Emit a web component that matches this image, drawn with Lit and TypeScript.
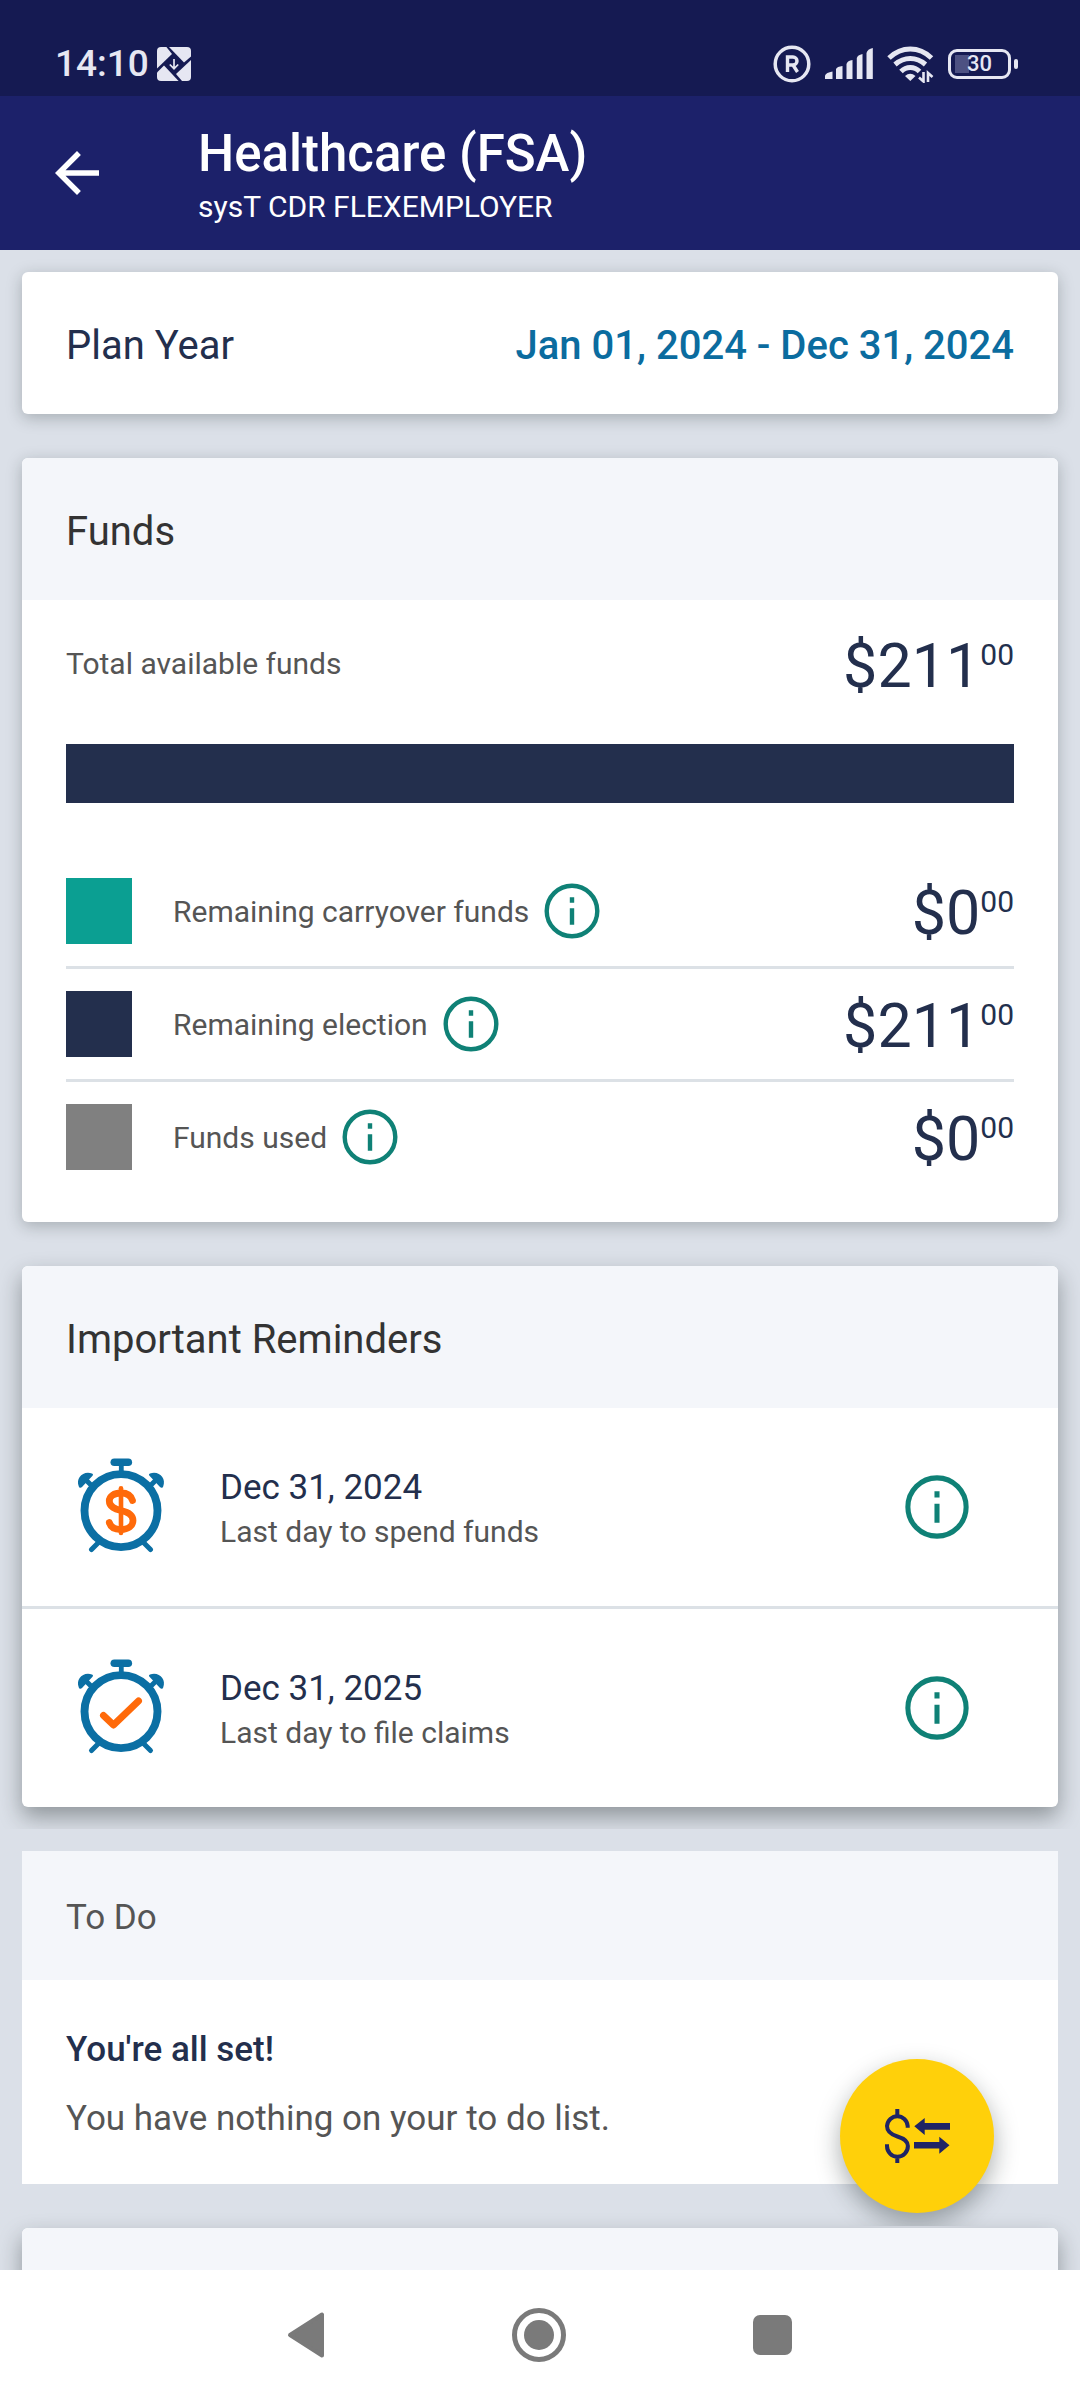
import { LitElement, html, css, svg } from "lit";
import { customElement, property } from "lit/decorators.js";

interface Fund {
  label: string;
  dollars: number;
  color: string;
}

interface Reminder {
  date: string;
  note: string;
  kind: "spend" | "claim";
}

const FUNDS: Fund[] = [
  { label: "Remaining carryover funds", dollars: 0, color: "#0b9f92" },
  { label: "Remaining election", dollars: 211, color: "#232f4d" },
  { label: "Funds used", dollars: 0, color: "#808080" },
];

const REMINDERS: Reminder[] = [
  { date: "Dec 31, 2024", note: "Last day to spend funds", kind: "spend" },
  { date: "Dec 31, 2025", note: "Last day to file claims", kind: "claim" },
];

@customElement("money-amount")
export class MoneyAmount extends LitElement {
  @property({ type: Number }) dollars = 0;

  static styles = css`
    :host {
      display: flex;
      align-items: flex-start;
      padding-top: 4px;
      color: #232f4d;
    }
    .dollars {
      font-size: 61px;
      line-height: 62px;
    }
    .cents {
      padding-top: 5px;
      font-size: 30px;
      line-height: 30px;
    }
  `;

  render() {
    return html`<span class="dollars">$${this.dollars}</span><span class="cents">00</span>`;
  }
}

@customElement("info-button")
export class InfoButton extends LitElement {
  @property() label = "";

  static styles = css`
    :host {
      display: block;
    }
    .button {
      display: block;
      width: 100%;
      padding: 0;
      border: 0;
      background: none;
      color: #0f8176;
      cursor: pointer;
    }
    .icon {
      display: block;
      width: 100%;
    }
  `;

  render() {
    return html`<button class="button" type="button" aria-label=${this.label}>
      <svg class="icon" viewBox="0 0 24 24" aria-hidden="true">
        <circle cx="12" cy="12" r="9.2" fill="none" stroke="currentColor" stroke-width="1.6" />
        <path d="M11.2 7h1.6v2h-1.6zM11.2 11h1.6v6h-1.6z" fill="currentColor" />
      </svg>
    </button>`;
  }
}

@customElement("alarm-icon")
export class AlarmIcon extends LitElement {
  @property() kind: "spend" | "claim" = "spend";

  static styles = css`
    :host {
      display: block;
      width: 110px;
    }
    .icon {
      display: block;
      width: 100%;
    }
  `;

  render() {
    const mark =
      this.kind === "spend"
        ? svg`<path d="M66.500 48.500C65 43.500 61 41 55 41C48 41 43.300 44.300 43.300 49C43.300 55 49 57 55 58.500C62 60 67 62.500 67 68.500C67 74 62 77.500 55 77.500C48.500 77.500 44.500 75 43.300 70.500" stroke-width="6.800" /><path d="M55 36.200V81" stroke-width="4.600" />`
        : svg`<path d="M37.500 62.500L47.500 72L72.500 48" stroke-width="7" />`;
    return html`<svg class="icon" viewBox="0 0 110 110" aria-hidden="true">
      <g fill="none" stroke="#0b6fa4" stroke-linecap="round">
        <circle cx="55" cy="58.600" r="36.500" stroke-width="7.900" />
        <path d="M48.300 10.300H62.300" stroke-width="7.600" />
        <path d="M55.300 12V20" stroke-width="4.800" />
        <path d="M20 28L27 35M90 28L83 35M25.500 97.500L33 90M84.500 97.500L77 90" stroke-width="5" />
      </g>
      <g fill="#0b6fa4">
        <path d="M12.800 34.500C9.500 26 17 18.500 26 21.500C27.300 22 27.300 23 26.300 24L16 35C14.800 36.300 13.300 36 12.800 34.500Z" />
        <path d="M97.200 34.500C100.500 26 93 18.500 84 21.500C82.700 22 82.700 23 83.700 24L94 35C95.200 36.300 96.700 36 97.200 34.500Z" />
      </g>
      <g fill="none" stroke="#ff6a0a" stroke-linecap="round" stroke-linejoin="round">${mark}</g>
    </svg>`;
  }
}

@customElement("status-bar")
export class StatusBar extends LitElement {
  static styles = css`
    :host {
      display: flex;
      justify-content: space-between;
      align-items: center;
      height: 64px;
      padding: 32px 62px 0 55px;
      background: #151a52;
      color: #e6e7f2;
    }
    .group {
      display: flex;
      align-items: center;
    }
    .time {
      font-size: 37px;
      line-height: 44px;
      font-weight: 500;
    }
    .left {
      gap: 8px;
    }
    .right {
      gap: 14px;
    }
    .icon {
      display: block;
    }
    .battery {
      display: flex;
      align-items: center;
      gap: 3px;
    }
    .cell {
      display: grid;
      place-items: center;
      box-sizing: border-box;
      width: 63px;
      height: 30px;
      border: 3px solid currentColor;
      border-radius: 9px;
      background: linear-gradient(#4d5182, #4d5182) 4px 3px / 14px 18px no-repeat;
      font-size: 22px;
      line-height: 24px;
      font-weight: 500;
    }
    .tip {
      width: 4px;
      height: 10px;
      border-radius: 2px;
      background: currentColor;
    }
  `;

  render() {
    return html`
      <div class="group left">
        <span class="time">14:10</span>
        <svg class="icon" width="34" height="34" viewBox="0 0 34 34" aria-hidden="true">
          <g fill="currentColor">
            <path d="M9.400 0L15 7L0 21.500V4A4 4 0 0 1 4 0Z" />
            <path d="M12 0H30A4 4 0 0 1 34 4V9.500L27 15.500Z" />
            <path d="M34 13V30A4 4 0 0 1 30 34H25L19 27Z" />
            <path d="M0 25.500L7 18.500L21.600 34H4A4 4 0 0 1 0 30Z" />
          </g>
          <path d="M17 12V21.500M12.800 17.500L17 21.700L21.200 17.500" fill="none" stroke="currentColor" stroke-width="1.700" />
        </svg>
      </div>
      <div class="group right">
        <svg class="icon" width="38" height="38" viewBox="0 0 38 38" aria-hidden="true">
          <circle cx="19" cy="19" r="16.800" fill="none" stroke="currentColor" stroke-width="3.500" />
          <path d="M14.500 27V12H20A4 4 0 0 1 20 20H14.500M20 20L24.500 27" fill="none" stroke="currentColor" stroke-width="3.400" />
        </svg>
        <svg class="icon" width="48" height="32" viewBox="0 0 48 32" aria-hidden="true">
          <g fill="currentColor">
            <path d="M0 31V27.500Q1 24.500 7.500 23.500V31Z" />
            <path d="M11 31V21Q12 18.500 17.500 18V31Z" />
            <path d="M21.500 31V16Q22.500 12.500 27.500 12V31Z" />
            <path d="M31.800 31V10Q32.500 7 37.500 6V31Z" />
            <path d="M41.500 31V5Q42.500 1 47.800 0V31Z" />
          </g>
        </svg>
        <svg class="icon" width="47" height="38" viewBox="0 0 47 38" aria-hidden="true">
          <g fill="none" stroke="currentColor" stroke-width="5">
            <path d="M2 13Q11.500 4 23.300 4T44.500 13" />
            <path d="M8 19.500Q15 13.500 23.300 13.500T38.500 19.500" />
            <path d="M14 26.500Q18 22.500 23.300 22.500T32.500 26.500" />
          </g>
          <path d="M18 31Q23.300 26.500 28.500 31L23.300 36Z" fill="currentColor" />
          <path d="M36.500 27V36.500L32 32.500M41 37V28L45.500 32" fill="none" stroke="currentColor" stroke-width="2.600" />
        </svg>
        <div class="battery">
          <span class="cell">30</span>
          <span class="tip"></span>
        </div>
      </div>
    `;
  }
}

@customElement("system-nav")
export class SystemNav extends LitElement {
  static styles = css`
    :host {
      display: flex;
      justify-content: center;
      align-items: center;
      gap: 145px;
      height: 130px;
      background: #fff;
    }
    .key {
      width: 88px;
      height: 88px;
      padding: 0;
      border: 0;
      background: none;
      color: #7a7a7a;
    }
    .icon {
      display: block;
      width: 100%;
    }
  `;

  render() {
    return html`
      <button class="key" type="button" aria-label="Back">
        <svg class="icon" viewBox="0 0 88 88" aria-hidden="true">
          <path d="M27 44L59 23.500V64.500Z" fill="currentColor" stroke="currentColor" stroke-width="4" stroke-linejoin="round" />
        </svg>
      </button>
      <button class="key" type="button" aria-label="Home">
        <svg class="icon" viewBox="0 0 88 88" aria-hidden="true">
          <circle cx="43" cy="44" r="24.500" fill="none" stroke="currentColor" stroke-width="5" />
          <circle cx="43" cy="44" r="15" fill="currentColor" />
        </svg>
      </button>
      <button class="key" type="button" aria-label="Recent apps">
        <svg class="icon" viewBox="0 0 88 88" aria-hidden="true">
          <rect x="24" y="24" width="39" height="40" rx="7" fill="currentColor" />
        </svg>
      </button>
    `;
  }
}

@customElement("app-root")
export class AppRoot extends LitElement {
  static styles = css`
    :host {
      display: flex;
      flex-direction: column;
      position: relative;
      height: 100vh;
      overflow: hidden;
      background: #dbe0e8;
      color: #555;
      font-family: Roboto, "Liberation Sans", sans-serif;
    }
    .app-bar {
      display: flex;
      align-items: center;
      gap: 88px;
      box-sizing: border-box;
      height: 154px;
      padding: 0 44px;
      background: #1c216a;
      color: #fff;
    }
    .back {
      width: 66px;
      height: 66px;
      padding: 0;
      border: 0;
      background: none;
      color: inherit;
    }
    .back-icon {
      display: block;
      width: 100%;
    }
    .titles {
      padding-top: 8px;
    }
    .title {
      margin: 0;
      font-size: 51px;
      line-height: 60px;
      font-weight: 500;
    }
    .employer {
      margin: 0;
      font-size: 30px;
      line-height: 46px;
    }
    .content {
      display: flex;
      flex: 1;
      flex-direction: column;
      gap: 44px;
      min-height: 0;
      padding: 22px;
      overflow: auto;
      scrollbar-width: none;
    }
    .card {
      flex: none;
      border-radius: 6px;
      background: #fff;
      box-shadow: 0 4px 16px rgba(20, 30, 30, 0.26);
    }
    .raised {
      box-shadow: 0 10px 22px rgba(20, 30, 30, 0.38);
      clip-path: inset(-22px);
    }
    .flat {
      border-radius: 0;
      box-shadow: none;
    }
    .plan {
      display: flex;
      justify-content: space-between;
      padding: 50px 44px 44px;
      color: #232f4d;
      font-size: 40px;
      line-height: 48px;
    }
    .period {
      color: #0b6c9f;
      font-weight: 500;
    }
    .heading {
      min-height: 48px;
      margin: 0;
      padding: 50px 44px 44px;
      border-radius: 6px 6px 0 0;
      background: #f4f6fa;
      color: #333;
      font-size: 40px;
      line-height: 48px;
      font-weight: 400;
    }
    .heading-small {
      margin: 0;
      padding: 46px 44px 41px;
      background: #f4f6fa;
      font-size: 35px;
      line-height: 42px;
      font-weight: 400;
    }
    .funds {
      padding: 31px 44px 30px;
      font-size: 30px;
      line-height: 36px;
    }
    .total {
      display: flex;
      justify-content: space-between;
      align-items: center;
    }
    .bar {
      display: flex;
      height: 59px;
      margin: 47px 0 53px;
    }
    .legend {
      margin: 0;
      padding: 0;
      list-style: none;
    }
    .fund {
      display: flex;
      align-items: center;
      height: 66px;
      padding: 22px 0;
      border-bottom: 3px solid #dce1e6;
    }
    .fund:last-child {
      border-bottom: 0;
    }
    .swatch {
      width: 66px;
      height: 66px;
      margin-right: 41px;
    }
    .fund-label {
      padding-top: 2px;
    }
    .fund-info {
      width: 66px;
      margin: 0 auto 0 10px;
    }
    .reminders {
      margin: 0;
      padding: 0;
      list-style: none;
    }
    .reminder {
      display: flex;
      align-items: center;
      padding: 44px 83px 44px 44px;
      border-bottom: 3px solid #dce1e6;
    }
    .reminder:last-child {
      border-bottom: 0;
    }
    .details {
      flex: 1;
      padding: 6px 0 0 44px;
      line-height: 44px;
    }
    .date {
      color: #232f4d;
      font-size: 35px;
    }
    .note {
      font-size: 30px;
    }
    .reminder-info {
      width: 76px;
    }
    .todo {
      display: flex;
      flex-direction: column;
      gap: 27px;
      padding: 49px 44px 44px;
      font-size: 35px;
      line-height: 42px;
    }
    .status,
    .message {
      margin: 0;
    }
    .status {
      color: #232f4d;
      font-weight: 500;
    }
    .fab {
      position: absolute;
      right: 86px;
      bottom: 187px;
      width: 154px;
      height: 154px;
      padding: 0;
      border: 0;
      border-radius: 50%;
      background: #ffd00a;
      color: #1f2465;
      box-shadow: 0 10px 24px rgba(20, 30, 30, 0.36);
      clip-path: inset(-40px -40px -13px -40px);
    }
    .fab-icon {
      display: block;
      width: 100%;
    }
  `;

  private renderFund(fund: Fund) {
    return html`<li class="fund">
      <span class="swatch" style="background:${fund.color}"></span>
      <span class="fund-label">${fund.label}</span>
      <info-button class="fund-info" label="About ${fund.label}"></info-button>
      <money-amount .dollars=${fund.dollars}></money-amount>
    </li>`;
  }

  private renderReminder(item: Reminder) {
    return html`<li class="reminder">
      <alarm-icon .kind=${item.kind}></alarm-icon>
      <div class="details">
        <div class="date">${item.date}</div>
        <div class="note">${item.note}</div>
      </div>
      <info-button class="reminder-info" label="About ${item.note}"></info-button>
    </li>`;
  }

  render() {
    const total = FUNDS.reduce((sum, fund) => sum + fund.dollars, 0);
    return html`
      <status-bar></status-bar>
      <header class="app-bar">
        <button class="back" type="button" aria-label="Back">
          <svg class="back-icon" viewBox="0 0 24 24" aria-hidden="true">
            <path d="M20 11H7.830l5.590-5.590L12 4l-8 8 8 8 1.410-1.410L7.830 13H20v-2z" fill="currentColor" />
          </svg>
        </button>
        <div class="titles">
          <h1 class="title">Healthcare (FSA)</h1>
          <p class="employer">sysT CDR FLEXEMPLOYER</p>
        </div>
      </header>
      <main class="content">
        <section class="card plan">
          <span>Plan Year</span>
          <span class="period">Jan 01, 2024 - Dec 31, 2024</span>
        </section>
        <section class="card">
          <h2 class="heading">Funds</h2>
          <div class="funds">
            <div class="total">
              <span>Total available funds</span>
              <money-amount .dollars=${total}></money-amount>
            </div>
            <div class="bar">
              ${FUNDS.map(
                (fund) => html`<span style="width:${(fund.dollars / total) * 100}%;background:${fund.color}"></span>`
              )}
            </div>
            <ul class="legend">
              ${FUNDS.map((fund) => this.renderFund(fund))}
            </ul>
          </div>
        </section>
        <section class="card raised">
          <h2 class="heading">Important Reminders</h2>
          <ul class="reminders">
            ${REMINDERS.map((item) => this.renderReminder(item))}
          </ul>
        </section>
        <section class="card flat">
          <h2 class="heading-small">To Do</h2>
          <div class="todo">
            <p class="status">You're all set!</p>
            <p class="message">You have nothing on your to do list.</p>
          </div>
        </section>
        <section class="card raised">
          <div class="heading"></div>
        </section>
      </main>
      <button class="fab" type="button" aria-label="Transactions">
        <svg class="fab-icon" viewBox="0 0 154 154" aria-hidden="true">
          <path
            d="M67.700 68.700V67A10.400 10.800 0 0 0 47 67C47 73 51 75.500 57.400 77.500C64 79.500 67.900 82 67.900 87A10.400 10.700 0 0 1 47 87V85.300M57.300 50V56M57.300 98V104"
            fill="none"
            stroke="currentColor"
            stroke-width="4"
          />
          <path
            d="M74.300 67.300L84.700 59V64H110V70.700H84.700V76ZM109.500 86.200L99.300 94.700V89.500H74V83H99.300V77.700Z"
            fill="currentColor"
          />
        </svg>
      </button>
      <system-nav></system-nav>
    `;
  }
}
